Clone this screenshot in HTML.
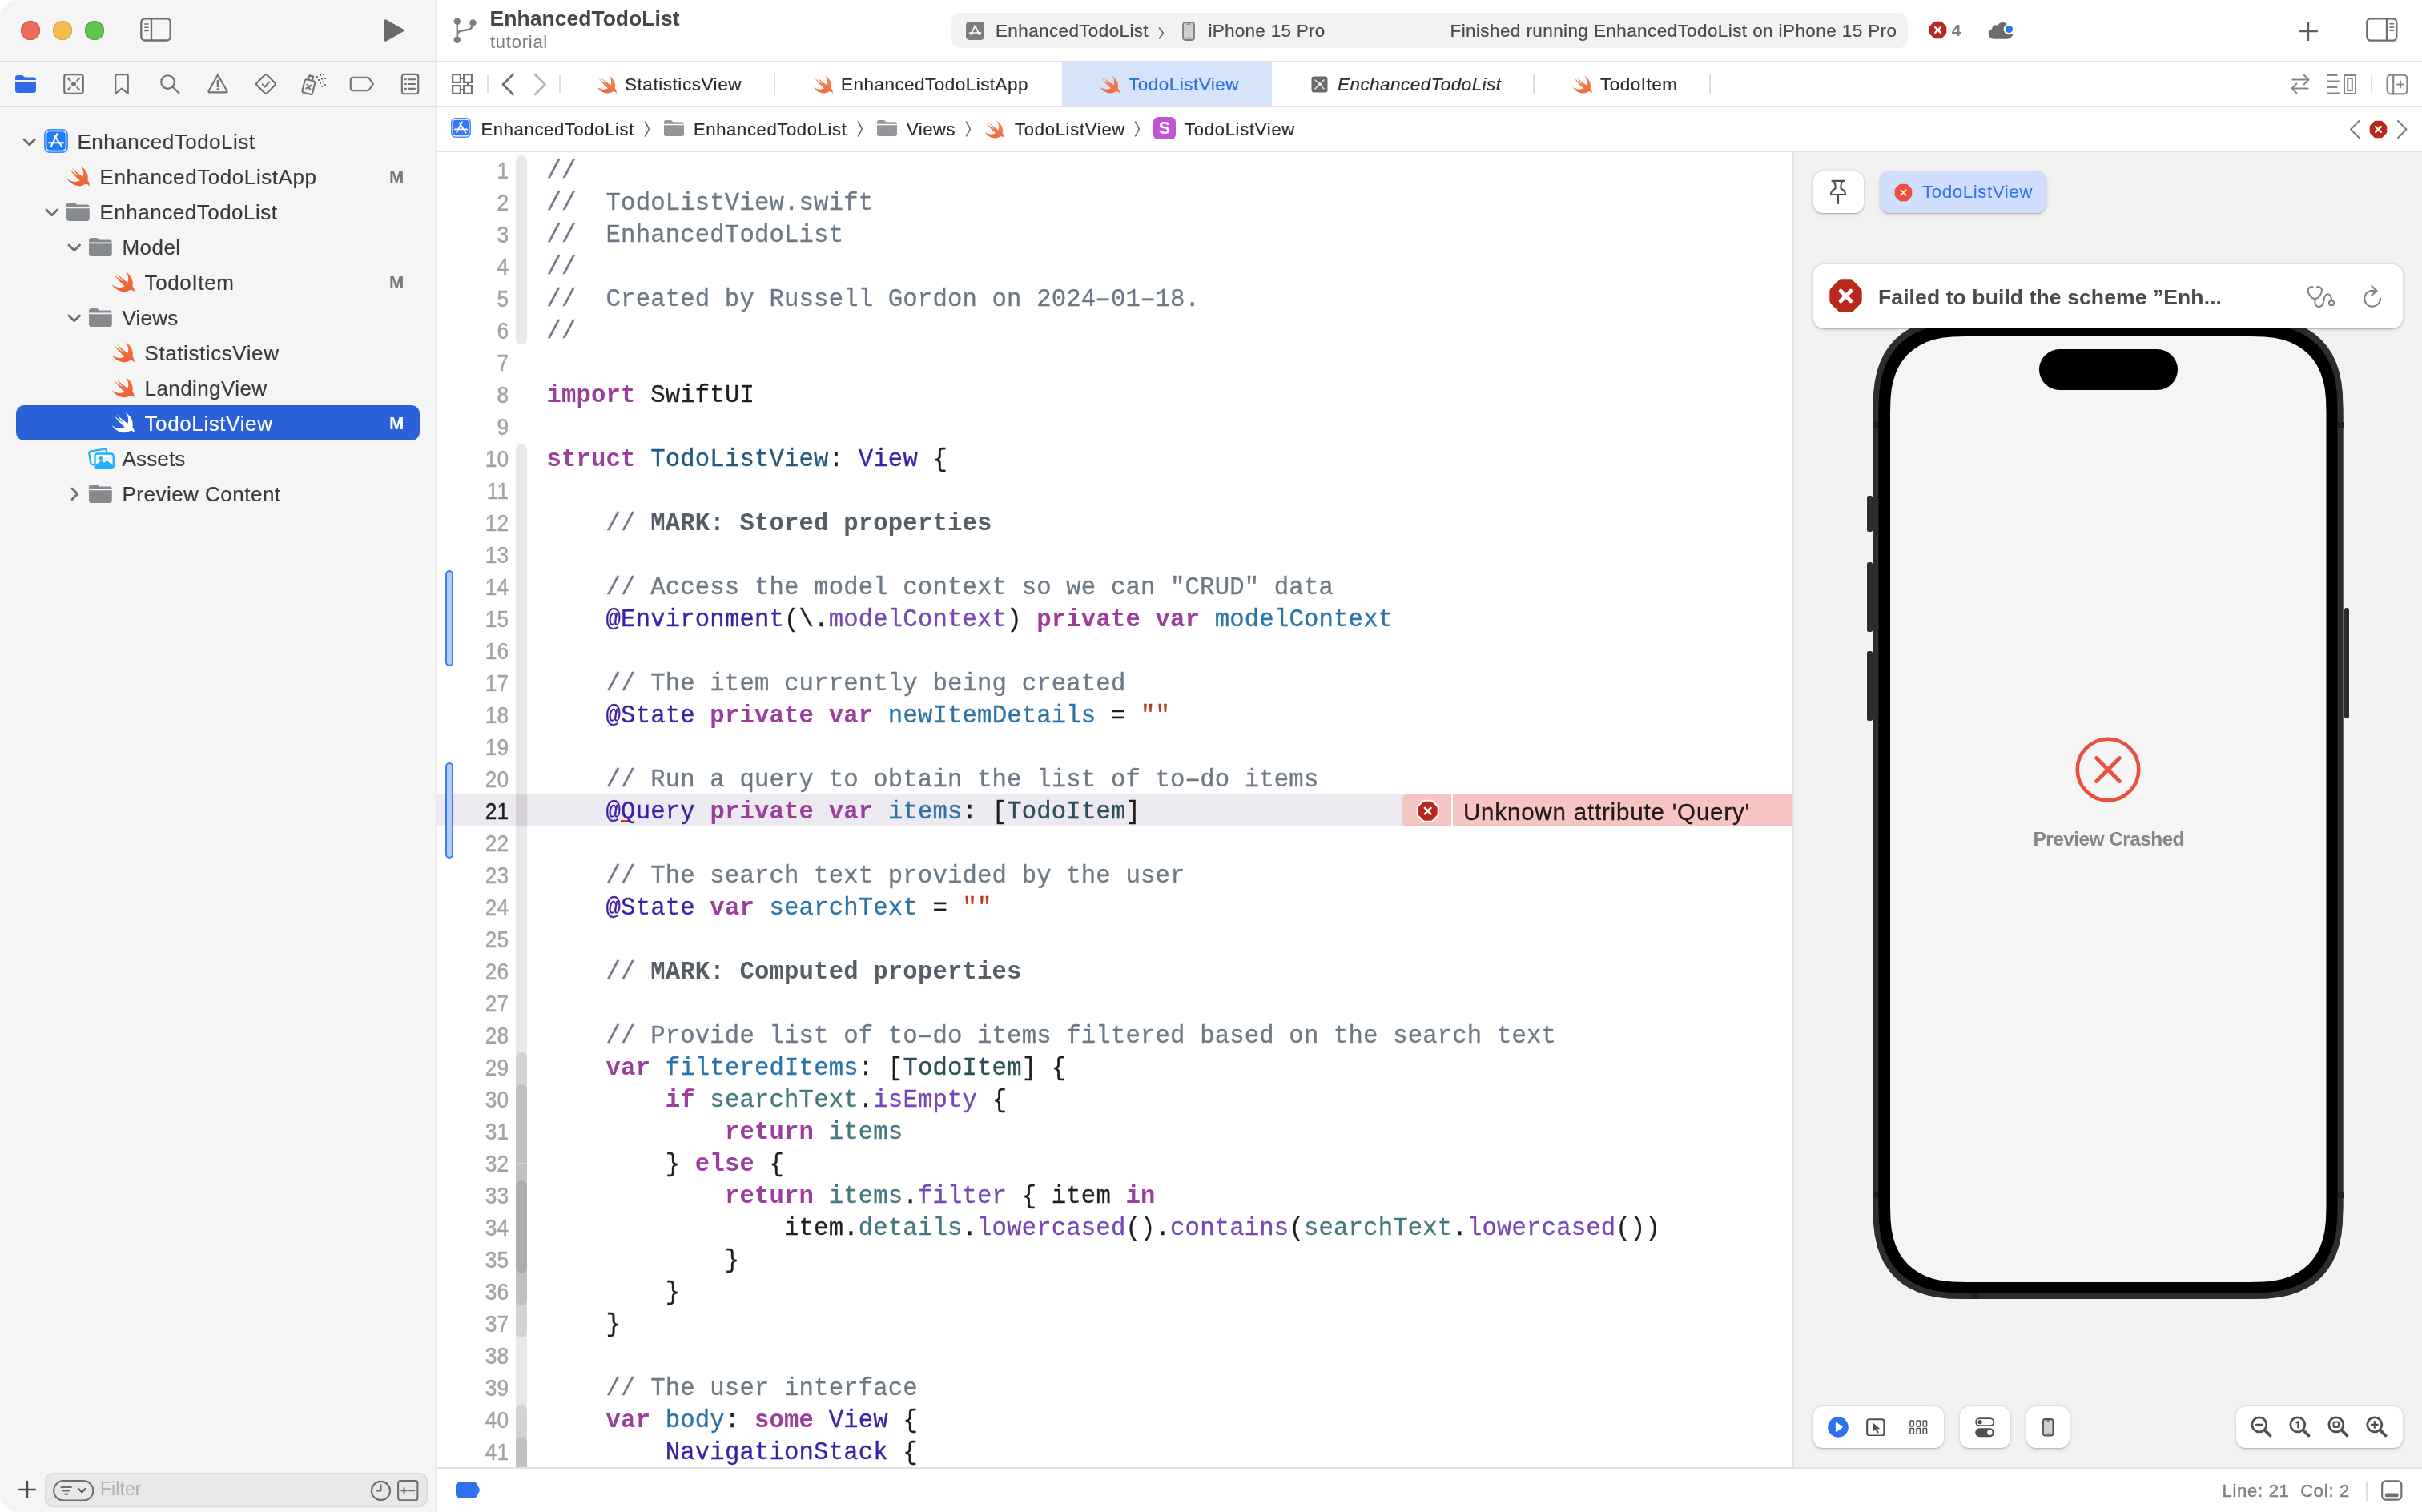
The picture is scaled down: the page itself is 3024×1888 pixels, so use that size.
<!DOCTYPE html>
<html lang="en">
<head>
<meta charset="utf-8">
<title>EnhancedTodoList — TodoListView.swift</title>
<style>
*{box-sizing:border-box;margin:0;padding:0}
html,body{width:3024px;height:1888px;overflow:hidden;background:#fff}
body{font-family:"Liberation Sans",sans-serif;color:#262626;position:relative;-webkit-font-smoothing:antialiased}
.abs{position:absolute}
#win{position:absolute;left:0;top:0;width:3024px;height:1888px;border-radius:22px;overflow:hidden;background:#fff;will-change:transform}
/* ---------- sidebar ---------- */
#sidebar{position:absolute;left:0;top:0;width:544px;height:1888px;background:#f5f5f5}
#sbdiv{position:absolute;left:543px;top:0;width:3px;height:1888px;background:linear-gradient(90deg,#f1f1f1 0,#f1f1f1 33%,#e9e9e9 33%,#e9e9e9 66%,#dedede 66%)}
.hline{position:absolute;height:2px;background:#e2e2e2}
.tl{position:absolute;top:26px;width:24px;height:24px;border-radius:50%}
/* ---------- text helpers ---------- */
.t{position:absolute;white-space:pre;line-height:1}


#editor{position:absolute;left:546px;top:190px;width:1692px;height:1642px;overflow:hidden;background:#fff}
#edin{position:absolute;left:-546px;top:-190px;width:3024px;height:1888px}
#edin>*{position:absolute}
.curline{left:546px;top:992px;width:1692px;height:40px;background:#ede9f0}
.rbwrap{left:644px;top:0;width:14px;height:1888px;overflow:hidden}
.rbwrap>*{position:absolute}
.rb{left:0;width:14px;border-radius:7px}
.r0{background:#e8e8e8}.r1{background:#d3d3d3;box-shadow:0 0 0 1px #e2e2e2}.r2{background:#c0c0c0;box-shadow:0 0 0 1px #d3d3d3}.r3{background:#acacac;box-shadow:0 0 0 1px #c6c6c6}
.rbcur{left:0;width:14px;top:992px;height:40px;background:#d6d0d9}
.chg{left:556px;width:10px;height:120px;border:2px solid #3b7cf5;border-radius:5px;background:#b3ccf9}
.ln{left:447px;width:188px;text-align:right;height:40px;line-height:40px;font-size:29.5px;color:#a3a3a3;font-family:"Liberation Sans",sans-serif;padding-top:0.500px;transform:scaleX(0.890);transform-origin:100% 50%;-webkit-text-stroke:0.45px currentColor}
.ln.cur{color:#1a1a1a}
.cl{left:682.400px;padding-top:1.700px;height:40px;line-height:40px;font-family:"Liberation Mono",monospace;font-size:30.600px;letter-spacing:0.180px;white-space:pre;color:#1f1f1f;-webkit-text-stroke:0.3px currentColor}
.cl .c{color:#6c7986}.cl .k{color:#9c3f9c;font-weight:bold;-webkit-text-stroke:0}.cl .td{color:#25587f}.cl .od{color:#2b73a8}
.cl .pt{color:#2b4f55}.cl .pv{color:#45777f}.cl .st,.cl .stu{color:#3b1fa6}.cl .sf{color:#7647b5}.cl .s{color:#c03a28}
.cl .m{color:#535e69;font-weight:bold;-webkit-text-stroke:0}
.cl .hy{display:inline-block;transform:scaleX(1.7)}
.cl .stu{background:linear-gradient(#d12f1b,#d12f1b) 0 27.700px/11.200px 3px no-repeat}
.err1{left:1750px;top:992px;width:62px;height:40px;background:#f7c5c1;border-radius:7px 0 0 7px;box-shadow:2px 0 0 #fff}
.err2{left:1814px;top:992px;width:424px;height:40px;background:#f7c5c1}

#pv{position:absolute;left:2240px;top:190px;width:784px;height:1643px;background:#f2f2f2}
.card{position:absolute;background:#fff;box-shadow:0 0.500px 1.500px rgba(0,0,0,.22),0 1.500px 6px rgba(0,0,0,.10)}

</style>
</head>
<body>
<svg width="0" height="0" style="position:absolute"><defs><linearGradient id="swg" x1="0" y1="0" x2="0" y2="1"><stop offset="0" stop-color="#f28b55"/><stop offset="1" stop-color="#ed6b3f"/></linearGradient><linearGradient id="swg2" x1="0" y1="0" x2="0" y2="1"><stop offset="0" stop-color="#f1743f"/><stop offset="1" stop-color="#ee6136"/></linearGradient></defs></svg>
<div id="win">
<div id="sidebar"></div>
<div id="sbdiv"></div>
<div class="tl" style="left:26px;background:#ed6a5e;box-shadow:inset 0 0 0 1px #d5534a"></div>
<div class="tl" style="left:66px;background:#f4bd50;box-shadow:inset 0 0 0 1px #d9a23c"></div>
<div class="tl" style="left:106px;background:#61c354;box-shadow:inset 0 0 0 1px #4ea73f"></div>
<svg class="abs" style="left:174.500px;top:22px" width="40" height="32" viewBox="0 0 40 32"><rect x="1.300" y="1.300" width="36.400" height="27.200" rx="4.600" fill="none" stroke="#6e6e6e" stroke-width="2.300"/><path d="M14 1.500v27" stroke="#6e6e6e" stroke-width="2.300"/><path d="M5.800 8h4.200M5.800 12.200h4.200M5.800 16.400h4.200" stroke="#6e6e6e" stroke-width="1.600" stroke-linecap="round"/></svg>
<svg class="abs" style="left:478px;top:23px" width="28" height="30" viewBox="0 0 28 30"><path d="M2 2.800c0-1.300 1.200-2 2.300-1.400L25.500 13.600c1.100.6 1.100 2.200 0 2.800L4.300 28.600C3.200 29.200 2 28.500 2 27.200z" fill="#6a6a6a"/></svg>
<div class="hline" style="left:0;top:76px;width:544px;background:#dcdcdc"></div>
<svg class="abs" style="left:19.0px;top:94.0px" width="26" height="22" viewBox="0 0 26 22"><path d="M0 3C0 1.300 1.200 0 2.800 0h5c1 0 1.600.300 2.300.900l.900.800c.600.500 1.100.700 2 .700H23c1.700 0 3 1.200 3 2.900V6H0z" fill="#2f6be8"/><path d="M0 8h26v11c0 1.700-1.300 3-3 3H3c-1.700 0-3-1.300-3-3z" fill="#2f6be8"/></svg>
<svg class="abs" style="left:78.0px;top:91.0px" width="28" height="28" viewBox="0 0 28 28"><rect x="2.200" y="2.200" width="23.600" height="23.600" rx="3" fill="none" stroke="#737373" stroke-width="2.150" stroke-linecap="round" stroke-linejoin="round"/><circle cx="14" cy="14" r="3" fill="#737373"/><path d="M7 7l2.700 2.700M21 7l-2.700 2.700M7 21l2.700-2.700M21 21l-2.700-2.700" fill="none" stroke="#737373" stroke-width="2.150" stroke-linecap="round" stroke-linejoin="round"/></svg>
<svg class="abs" style="left:142.0px;top:91.0px" width="20" height="28" viewBox="0 0 20 28"><path d="M2.200 4.200c0-1.100.900-2 2-2h11.600c1.100 0 2 .900 2 2V26L10 19.500 2.200 26z" fill="none" stroke="#737373" stroke-width="2.150" stroke-linecap="round" stroke-linejoin="round"/></svg>
<svg class="abs" style="left:198.0px;top:91.0px" width="28" height="28" viewBox="0 0 28 28"><circle cx="11.500" cy="11.500" r="8.300" fill="none" stroke="#737373" stroke-width="2.150" stroke-linecap="round" stroke-linejoin="round"/><path d="M17.800 17.800L25.500 25.500" fill="none" stroke="#737373" stroke-width="2.150" stroke-linecap="round" stroke-linejoin="round" stroke-width="3"/></svg>
<svg class="abs" style="left:258.0px;top:91.0px" width="28" height="26" viewBox="0 0 28 26"><path d="M14 2.500L25.500 22.800c.4.800-.1 1.500-.9 1.500H3.400c-.8 0-1.300-.7-.9-1.500z" fill="none" stroke="#737373" stroke-width="2.150" stroke-linecap="round" stroke-linejoin="round"/><path d="M14 10v7" stroke="#737373" stroke-width="2.600" stroke-linecap="round"/><circle cx="14" cy="20.600" r="1.500" fill="#737373"/></svg>
<svg class="abs" style="left:317.0px;top:90.0px" width="30" height="30" viewBox="0 0 30 30"><rect x="6" y="6" width="18" height="18" rx="2.200" transform="rotate(45 15 15)" fill="none" stroke="#737373" stroke-width="2.150" stroke-linecap="round" stroke-linejoin="round"/><path d="M10.800 15.500l3 3 5.400-6" fill="none" stroke="#737373" stroke-width="2.150" stroke-linecap="round" stroke-linejoin="round"/></svg>
<svg class="abs" style="left:376.0px;top:90.0px" width="32" height="30" viewBox="0 0 32 30"><g transform="rotate(14 9 18)"><rect x="3" y="10" width="13" height="17" rx="2.500" fill="none" stroke="#737373" stroke-width="2.150" stroke-linecap="round" stroke-linejoin="round"/><path d="M7 10V4.500h5V10" fill="none" stroke="#737373" stroke-width="2.150" stroke-linecap="round" stroke-linejoin="round"/><path d="M7 16l5 5M12 16l-5 5" fill="none" stroke="#737373" stroke-width="2.150" stroke-linecap="round" stroke-linejoin="round" stroke-width="2"/></g><g fill="#737373"><rect x="19" y="5" width="2" height="2"/><rect x="23" y="3" width="2" height="2"/><rect x="27" y="2" width="2" height="2"/><rect x="21" y="9" width="2" height="2"/><rect x="25" y="7.500" width="2" height="2"/><rect x="29" y="7" width="2" height="2"/><rect x="23" y="13" width="2" height="2"/><rect x="27" y="11.500" width="2" height="2"/><rect x="25" y="17" width="2" height="2"/><rect x="29" y="15" width="2" height="2"/></g></svg>
<svg class="abs" style="left:436.0px;top:95.0px" width="32" height="20" viewBox="0 0 32 20"><path d="M4.500 1.800h18.300c.8 0 1.500.3 2 1l4.600 6.200c.5.600.5 1.400 0 2l-4.600 6.200c-.5.700-1.200 1-2 1H4.500c-1.500 0-2.700-1.200-2.700-2.700v-11c0-1.500 1.200-2.700 2.700-2.700z" fill="none" stroke="#737373" stroke-width="2.150" stroke-linecap="round" stroke-linejoin="round"/></svg>
<svg class="abs" style="left:500.0px;top:91.0px" width="24" height="28" viewBox="0 0 24 28"><rect x="1.800" y="1.800" width="20.400" height="24.400" rx="3" fill="none" stroke="#737373" stroke-width="2.150" stroke-linecap="round" stroke-linejoin="round"/><path d="M10 8.200h8M10 14h8M10 19.800h8" fill="none" stroke="#737373" stroke-width="2.150" stroke-linecap="round" stroke-linejoin="round"/><path d="M5.800 8.200h1.200M5.800 14h1.200M5.800 19.800h1.200" fill="none" stroke="#737373" stroke-width="2.150" stroke-linecap="round" stroke-linejoin="round"/></svg>
<div class="hline" style="left:0;top:132px;width:544px;background:#dcdcdc"></div>
<svg class="abs" style="left:27.5px;top:171.8px" width="17.5" height="10.75" viewBox="-2 -2 17.5 10.75"><path d="M0 0L6.75 6.75L13.5 0" fill="none" stroke="#6b6b6b" stroke-width="2.8" stroke-linecap="round" stroke-linejoin="round"/></svg>
<svg class="abs" style="left:54.7px;top:161.0px" width="30" height="30" viewBox="0 0 30 30"><rect x="0" y="0" width="30" height="30" rx="7" fill="#3f8ff9"/><rect x="2.600" y="2.600" width="24.800" height="24.800" rx="4.600" fill="#1f7cf8" stroke="#fff" stroke-width="1.500"/><g stroke="#fff" stroke-width="2.100" stroke-linecap="round" fill="none"><path d="M8.600 22.200L16.400 6.200M13.300 8.600l9 13.600M5.900 17.300h18.300"/></g></svg>
<span class="t" style="left:96.5px;top:163.5px;font-size:26px;color:#3a3a3a;letter-spacing:0.508px;-webkit-text-stroke:0.2px;">EnhancedTodoList</span>
<svg class="abs" style="left:79.8px;top:202.1px" width="37.1" height="37.1" viewBox="0 0 24 24"><path d="M13.543 3.41c4.114 2.47 6.545 7.162 5.549 11.131-.024.093-.05.181-.076.272l.002.001c2.062 2.538 1.5 5.258 1.236 4.745-1.072-2.086-3.066-1.568-4.088-1.043a6.803 6.803 0 0 1-.281.158l-.02.012-.002.002c-2.115 1.123-4.957 1.205-7.812-.022a12.568 12.568 0 0 1-5.64-4.838c.649.48 1.35.902 2.097 1.252 3.019 1.414 6.051 1.311 8.197-.002C9.651 12.73 7.101 9.67 5.146 7.191a10.628 10.628 0 0 1-1.005-1.384c2.34 2.142 6.038 4.83 7.365 5.576C8.69 8.408 6.208 4.743 6.324 4.86c4.436 4.47 8.528 6.996 8.528 6.996.154.085.27.154.36.213.085-.215.16-.437.224-.668.708-2.588-.09-5.548-1.893-7.992z" fill="url(#swg2)"/></svg>
<span class="t" style="left:124.5px;top:207.5px;font-size:26px;color:#3a3a3a;letter-spacing:0.572px;-webkit-text-stroke:0.2px;">EnhancedTodoListApp</span>
<span class="t" style="left:486.0px;top:209.5px;font-size:22px;color:#7a7a7a;font-weight:bold;">M</span>
<svg class="abs" style="left:55.5px;top:259.8px" width="17.5" height="10.75" viewBox="-2 -2 17.5 10.75"><path d="M0 0L6.75 6.75L13.5 0" fill="none" stroke="#6b6b6b" stroke-width="2.8" stroke-linecap="round" stroke-linejoin="round"/></svg>
<svg class="abs" style="left:83.4px;top:253.2px" width="28.8" height="23.0" viewBox="0 0 30 24"><path d="M0 3.2C0 1.4 1.3 0 3 0h6.6c1 0 1.7.3 2.4 1l1 1c.5.5 1 .7 1.800.7H27c1.700 0 3 1.300 3 3V5.800H0z" fill="#868a8e"/><path d="M0 7.600h30V20.800c0 1.800-1.300 3.200-3 3.200H3c-1.700 0-3-1.400-3-3.200z" fill="#868a8e"/></svg>
<span class="t" style="left:124.5px;top:251.5px;font-size:26px;color:#3a3a3a;letter-spacing:0.508px;-webkit-text-stroke:0.2px;">EnhancedTodoList</span>
<svg class="abs" style="left:83.5px;top:303.8px" width="17.5" height="10.75" viewBox="-2 -2 17.5 10.75"><path d="M0 0L6.75 6.75L13.5 0" fill="none" stroke="#6b6b6b" stroke-width="2.8" stroke-linecap="round" stroke-linejoin="round"/></svg>
<svg class="abs" style="left:111.4px;top:297.2px" width="28.8" height="23.0" viewBox="0 0 30 24"><path d="M0 3.2C0 1.4 1.3 0 3 0h6.6c1 0 1.7.3 2.4 1l1 1c.5.5 1 .7 1.800.7H27c1.700 0 3 1.300 3 3V5.800H0z" fill="#868a8e"/><path d="M0 7.600h30V20.800c0 1.800-1.300 3.200-3 3.200H3c-1.700 0-3-1.400-3-3.200z" fill="#868a8e"/></svg>
<span class="t" style="left:152.5px;top:295.5px;font-size:26px;color:#3a3a3a;letter-spacing:0.441px;-webkit-text-stroke:0.2px;">Model</span>
<svg class="abs" style="left:135.8px;top:334.1px" width="37.1" height="37.1" viewBox="0 0 24 24"><path d="M13.543 3.41c4.114 2.47 6.545 7.162 5.549 11.131-.024.093-.05.181-.076.272l.002.001c2.062 2.538 1.5 5.258 1.236 4.745-1.072-2.086-3.066-1.568-4.088-1.043a6.803 6.803 0 0 1-.281.158l-.02.012-.002.002c-2.115 1.123-4.957 1.205-7.812-.022a12.568 12.568 0 0 1-5.64-4.838c.649.48 1.35.902 2.097 1.252 3.019 1.414 6.051 1.311 8.197-.002C9.651 12.73 7.101 9.67 5.146 7.191a10.628 10.628 0 0 1-1.005-1.384c2.34 2.142 6.038 4.83 7.365 5.576C8.69 8.408 6.208 4.743 6.324 4.86c4.436 4.47 8.528 6.996 8.528 6.996.154.085.27.154.36.213.085-.215.16-.437.224-.668.708-2.588-.09-5.548-1.893-7.992z" fill="url(#swg2)"/></svg>
<span class="t" style="left:180.5px;top:339.5px;font-size:26px;color:#3a3a3a;letter-spacing:0.637px;-webkit-text-stroke:0.2px;">TodoItem</span>
<span class="t" style="left:486.0px;top:341.5px;font-size:22px;color:#7a7a7a;font-weight:bold;">M</span>
<svg class="abs" style="left:83.5px;top:391.8px" width="17.5" height="10.75" viewBox="-2 -2 17.5 10.75"><path d="M0 0L6.75 6.75L13.5 0" fill="none" stroke="#6b6b6b" stroke-width="2.8" stroke-linecap="round" stroke-linejoin="round"/></svg>
<svg class="abs" style="left:111.4px;top:385.2px" width="28.8" height="23.0" viewBox="0 0 30 24"><path d="M0 3.2C0 1.4 1.3 0 3 0h6.6c1 0 1.7.3 2.4 1l1 1c.5.5 1 .7 1.800.7H27c1.700 0 3 1.300 3 3V5.800H0z" fill="#868a8e"/><path d="M0 7.600h30V20.800c0 1.800-1.300 3.200-3 3.200H3c-1.700 0-3-1.400-3-3.200z" fill="#868a8e"/></svg>
<span class="t" style="left:152.5px;top:383.5px;font-size:26px;color:#3a3a3a;letter-spacing:0.222px;-webkit-text-stroke:0.2px;">Views</span>
<svg class="abs" style="left:135.8px;top:422.1px" width="37.1" height="37.1" viewBox="0 0 24 24"><path d="M13.543 3.41c4.114 2.47 6.545 7.162 5.549 11.131-.024.093-.05.181-.076.272l.002.001c2.062 2.538 1.5 5.258 1.236 4.745-1.072-2.086-3.066-1.568-4.088-1.043a6.803 6.803 0 0 1-.281.158l-.02.012-.002.002c-2.115 1.123-4.957 1.205-7.812-.022a12.568 12.568 0 0 1-5.64-4.838c.649.48 1.35.902 2.097 1.252 3.019 1.414 6.051 1.311 8.197-.002C9.651 12.73 7.101 9.67 5.146 7.191a10.628 10.628 0 0 1-1.005-1.384c2.34 2.142 6.038 4.83 7.365 5.576C8.69 8.408 6.208 4.743 6.324 4.86c4.436 4.47 8.528 6.996 8.528 6.996.154.085.27.154.36.213.085-.215.16-.437.224-.668.708-2.588-.09-5.548-1.893-7.992z" fill="url(#swg2)"/></svg>
<span class="t" style="left:180.5px;top:427.5px;font-size:26px;color:#3a3a3a;letter-spacing:0.578px;-webkit-text-stroke:0.2px;">StatisticsView</span>
<svg class="abs" style="left:135.8px;top:466.1px" width="37.1" height="37.1" viewBox="0 0 24 24"><path d="M13.543 3.41c4.114 2.47 6.545 7.162 5.549 11.131-.024.093-.05.181-.076.272l.002.001c2.062 2.538 1.5 5.258 1.236 4.745-1.072-2.086-3.066-1.568-4.088-1.043a6.803 6.803 0 0 1-.281.158l-.02.012-.002.002c-2.115 1.123-4.957 1.205-7.812-.022a12.568 12.568 0 0 1-5.64-4.838c.649.48 1.35.902 2.097 1.252 3.019 1.414 6.051 1.311 8.197-.002C9.651 12.73 7.101 9.67 5.146 7.191a10.628 10.628 0 0 1-1.005-1.384c2.34 2.142 6.038 4.83 7.365 5.576C8.69 8.408 6.208 4.743 6.324 4.86c4.436 4.47 8.528 6.996 8.528 6.996.154.085.27.154.36.213.085-.215.16-.437.224-.668.708-2.588-.09-5.548-1.893-7.992z" fill="url(#swg2)"/></svg>
<span class="t" style="left:180.5px;top:471.5px;font-size:26px;color:#3a3a3a;letter-spacing:0.419px;-webkit-text-stroke:0.2px;">LandingView</span>
<div class="abs" style="left:20px;top:506px;width:504px;height:44px;border-radius:10px;background:#2a60d8"></div>
<svg class="abs" style="left:135.8px;top:510.1px" width="37.1" height="37.1" viewBox="0 0 24 24"><path d="M13.543 3.41c4.114 2.47 6.545 7.162 5.549 11.131-.024.093-.05.181-.076.272l.002.001c2.062 2.538 1.5 5.258 1.236 4.745-1.072-2.086-3.066-1.568-4.088-1.043a6.803 6.803 0 0 1-.281.158l-.02.012-.002.002c-2.115 1.123-4.957 1.205-7.812-.022a12.568 12.568 0 0 1-5.64-4.838c.649.48 1.35.902 2.097 1.252 3.019 1.414 6.051 1.311 8.197-.002C9.651 12.73 7.101 9.67 5.146 7.191a10.628 10.628 0 0 1-1.005-1.384c2.34 2.142 6.038 4.83 7.365 5.576C8.69 8.408 6.208 4.743 6.324 4.86c4.436 4.47 8.528 6.996 8.528 6.996.154.085.27.154.36.213.085-.215.16-.437.224-.668.708-2.588-.09-5.548-1.893-7.992z" fill="#fff"/></svg>
<span class="t" style="left:180.5px;top:515.5px;font-size:26px;color:#fff;letter-spacing:0.608px;-webkit-text-stroke:0.2px;">TodoListView</span>
<span class="t" style="left:486.0px;top:517.5px;font-size:22px;color:#fff;font-weight:bold;">M</span>
<svg class="abs" style="left:109.5px;top:558.7px" width="33" height="27.500" viewBox="0 0 34 28.300"><g transform="rotate(-9 12 11)"><rect x="2" y="3.200" width="22.500" height="17.500" rx="3" fill="none" stroke="#22aff8" stroke-width="2.300"/></g><rect x="8.700" y="7.700" width="24" height="19.400" rx="3.200" fill="#f5f5f5" stroke="#22aff8" stroke-width="2.400"/><path d="M9.500 26.300v-3.300l6-5.800c.8-.8 1.900-.8 2.700 0l2.300 2.300 2.300-2c.8-.7 1.900-.7 2.700 0l6.300 5.500v3.300z" fill="#22aff8"/><circle cx="16.300" cy="13.700" r="2.300" fill="#22aff8"/></svg>
<span class="t" style="left:152.5px;top:559.5px;font-size:26px;color:#3a3a3a;letter-spacing:0.164px;-webkit-text-stroke:0.2px;">Assets</span>
<svg class="abs" style="left:87.6px;top:608.2px" width="10.75" height="17.5" viewBox="-2 -2 10.75 17.5"><path d="M0 0L6.75 6.75L0 13.5" fill="none" stroke="#6b6b6b" stroke-width="2.8" stroke-linecap="round" stroke-linejoin="round"/></svg>
<svg class="abs" style="left:111.4px;top:605.2px" width="28.8" height="23.0" viewBox="0 0 30 24"><path d="M0 3.2C0 1.4 1.3 0 3 0h6.6c1 0 1.7.3 2.4 1l1 1c.5.5 1 .7 1.800.7H27c1.700 0 3 1.300 3 3V5.800H0z" fill="#868a8e"/><path d="M0 7.600h30V20.800c0 1.800-1.300 3.200-3 3.200H3c-1.700 0-3-1.400-3-3.200z" fill="#868a8e"/></svg>
<span class="t" style="left:152.5px;top:603.5px;font-size:26px;color:#3a3a3a;letter-spacing:0.485px;-webkit-text-stroke:0.2px;">Preview Content</span>
<svg class="abs" style="left:23px;top:1849px" width="22" height="22" viewBox="0 0 22 22"><path d="M11 1v20M1 11h20" stroke="#4a4a4a" stroke-width="2.400" stroke-linecap="round"/></svg>
<div class="abs" style="left:56px;top:1838.500px;width:478px;height:43.500px;border-radius:11px;background:#e8e8e8;box-shadow:inset 0 0 0 1.500px #d9d9d9"></div>
<svg class="abs" style="left:65.500px;top:1847.500px" width="51.500" height="26.700" viewBox="0 0 54 28"><rect x="1.200" y="1.200" width="51.600" height="25.600" rx="12.800" fill="none" stroke="#6e6e6e" stroke-width="2.200"/><path d="M11 9.500h13M13.500 14h8M16 18.500h3" stroke="#6e6e6e" stroke-width="2.200" stroke-linecap="round"/><path d="M33.500 11.500l4.500 4.500 4.500-4.500" fill="none" stroke="#5e5e5e" stroke-width="2.400" stroke-linecap="round" stroke-linejoin="round"/></svg>
<span class="t" style="left:125.0px;top:1848.3px;font-size:23px;color:#b0b0b0;letter-spacing:0.065px;">Filter</span>
<svg class="abs" style="left:461.500px;top:1847.500px" width="27" height="27" viewBox="0 0 28 28"><circle cx="14" cy="14" r="12" fill="none" stroke="#6e6e6e" stroke-width="2.200"/><path d="M14 6.500V14H8.500" fill="none" stroke="#6e6e6e" stroke-width="2.200" stroke-linecap="round" stroke-linejoin="round"/></svg>
<svg class="abs" style="left:496px;top:1847.500px" width="26.500" height="26.500" viewBox="0 0 28 28"><rect x="1.200" y="1.200" width="25.600" height="25.600" rx="3" fill="none" stroke="#6e6e6e" stroke-width="2.200"/><path d="M5.500 14h7M9 10.500v7M16 14h6.500" stroke="#6e6e6e" stroke-width="2.200" stroke-linecap="round"/></svg>
<div class="hline" style="left:546px;top:76px;width:2478px"></div>
<svg class="abs" style="left:562px;top:18px" width="38" height="40" viewBox="0 0 38 40"><g fill="#7d7d7d"><circle cx="8.800" cy="8.800" r="4.200"/><circle cx="28.500" cy="10.500" r="4.200"/><circle cx="8.800" cy="31.800" r="4.200"/></g><path d="M8.800 9v22M8.800 27c0-6 4-6.500 10-7.200 6-.7 9.700-2.300 9.700-9" fill="none" stroke="#7d7d7d" stroke-width="2.400"/></svg>
<span class="t" style="left:611.5px;top:10.4px;font-size:26.5px;color:#464646;letter-spacing:0.030px;font-weight:bold;">EnhancedTodoList</span>
<span class="t" style="left:612.0px;top:41.6px;font-size:22px;color:#7d7d7d;letter-spacing:0.746px;">tutorial</span>
<div class="abs" style="left:1188px;top:16px;width:1194px;height:44px;border-radius:11px;background:#f2f2f2"></div>
<svg class="abs" style="left:1206px;top:26.800px" width="23" height="23" viewBox="0 0 23 23"><rect width="23" height="23" rx="4.500" fill="#7d7d7d"/><g stroke="#fff" stroke-width="1.700" stroke-linecap="round" fill="none"><path d="M10.700 6.800L6.300 16M12.300 6.800l4.400 9.200M10.200 5.200l1.300 2.400M12.800 5.200l-1.300 2.400M4.500 14h14"/></g></svg>
<span class="t" style="left:1243.0px;top:28.2px;font-size:22.5px;color:#4a4a4a;letter-spacing:0.365px;-webkit-text-stroke:0.2px;">EnhancedTodoList</span>
<svg class="abs" style="left:1446px;top:33.500px" width="8" height="15" viewBox="0 0 8 15"><path d="M1.500 1.200Q4.300 4.500 6.300 7.500 4.300 10.500 1.500 13.800" fill="none" stroke="#6e6e6e" stroke-width="1.800" stroke-linecap="round" stroke-linejoin="round"/></svg>
<svg class="abs" style="left:1476px;top:26.500px" width="16" height="24" viewBox="0 0 16 24"><rect x="1" y="1" width="14" height="22" rx="3" fill="#cfcfcf" stroke="#7d7d7d" stroke-width="1.800"/><path d="M6 3.200h4M5.500 20.500h5" stroke="#7d7d7d" stroke-width="1.300" stroke-linecap="round"/></svg>
<span class="t" style="left:1508.5px;top:28.2px;font-size:22.5px;color:#4a4a4a;letter-spacing:0.261px;-webkit-text-stroke:0.2px;">iPhone 15 Pro</span>
<span class="t" style="left:1810.5px;top:28.2px;font-size:22.5px;color:#4a4a4a;letter-spacing:0.401px;-webkit-text-stroke:0.2px;">Finished running EnhancedTodoList on iPhone 15 Pro</span>
<svg class="abs" style="left:2408.2px;top:26.1px" width="23.0" height="23.0" viewBox="0 0 26 26"><path d="M9.500 4.200h7l5.300 5.300v7l-5.300 5.300h-7l-5.300-5.300v-7z" fill="#b8281c" stroke="#b8281c" stroke-width="6.800" stroke-linejoin="round"/><path d="M9.200 9.200l7.600 7.600M16.800 9.200l-7.600 7.600" stroke="#fff" stroke-width="2.6" stroke-linecap="round"/></svg>
<span class="t" style="left:2436.8px;top:27.3px;font-size:21px;color:#7d7d7d;font-weight:bold;">4</span>
<svg class="abs" style="left:2478px;top:24px" width="40" height="30" viewBox="2478 24 40 30"><path d="M2489.500 48.700c-4 0-6.800-2.800-6.800-6.400 0-2.800 1.700-5.200 4.300-6.100.3-3 2.300-5 5-5 .8 0 1.500.2 2.200.5 1.300-2.200 3.700-3.600 6.500-3.600 4.300 0 7.800 3.300 8 7.500 2.700.7 4.600 3.100 4.600 6 0 3.900-3 7.100-7.100 7.100z" fill="#6c6c6c"/><circle cx="2508.400" cy="36.500" r="6.700" fill="#fff"/><circle cx="2508.400" cy="36.500" r="4.600" fill="#2f72f0"/></svg>
<svg class="abs" style="left:2870px;top:26.500px" width="24" height="24" viewBox="0 0 24 24"><path d="M12 1v22M1 12h22" stroke="#5e5e5e" stroke-width="2.400" stroke-linecap="round"/></svg>
<svg class="abs" style="left:2954px;top:22px" width="40" height="31" viewBox="0 0 40 31"><rect x="1.300" y="1.300" width="37" height="27.400" rx="4.600" fill="none" stroke="#6e6e6e" stroke-width="2.300"/><path d="M26 1.500v27" stroke="#6e6e6e" stroke-width="2.300"/><path d="M30 7.700h4.600M30 12h4.600M30 16.300h4.600" stroke="#6e6e6e" stroke-width="1.600" stroke-linecap="round"/></svg>
<div class="abs" style="left:1326px;top:78px;width:262px;height:54px;background:#d5e3fb"></div>
<div class="hline" style="left:546px;top:132px;width:2478px"></div>
<svg class="abs" style="left:563px;top:91px" width="28" height="28" viewBox="0 0 28 28"><g fill="none" stroke="#737373" stroke-width="2.200"><rect x="2.100" y="2.100" width="9.800" height="9.800"/><rect x="16.100" y="2.100" width="9.800" height="9.800"/><rect x="2.100" y="16.100" width="9.800" height="9.800"/><rect x="16.100" y="16.100" width="9.800" height="9.800"/><path d="M12 7h4M21 12v4M12 21h4"/></g></svg>
<div class="abs" style="left:608px;top:93px;width:2px;height:24px;background:#dedede"></div>
<div class="abs" style="left:698px;top:93px;width:2px;height:24px;background:#dedede"></div>
<div class="abs" style="left:966px;top:93px;width:2px;height:24px;background:#dedede"></div>
<div class="abs" style="left:1914px;top:93px;width:2px;height:24px;background:#dedede"></div>
<div class="abs" style="left:2134px;top:93px;width:2px;height:24px;background:#dedede"></div>
<svg class="abs" style="left:625.8px;top:90.5px" width="16.5" height="29" viewBox="-2 -2 16.5 29"><path d="M12.5 0L0 12.5L12.5 25" fill="none" stroke="#6e6e6e" stroke-width="2.6" stroke-linecap="round" stroke-linejoin="round"/></svg>
<svg class="abs" style="left:665.8px;top:90.5px" width="16.5" height="29" viewBox="-2 -2 16.5 29"><path d="M0 0L12.5 12.5L0 25" fill="none" stroke="#b4b4b4" stroke-width="2.6" stroke-linecap="round" stroke-linejoin="round"/></svg>
<svg class="abs" style="left:741.6px;top:89.7px" width="32.4" height="32.4" viewBox="0 0 24 24"><path d="M13.543 3.41c4.114 2.47 6.545 7.162 5.549 11.131-.024.093-.05.181-.076.272l.002.001c2.062 2.538 1.5 5.258 1.236 4.745-1.072-2.086-3.066-1.568-4.088-1.043a6.803 6.803 0 0 1-.281.158l-.02.012-.002.002c-2.115 1.123-4.957 1.205-7.812-.022a12.568 12.568 0 0 1-5.64-4.838c.649.48 1.35.902 2.097 1.252 3.019 1.414 6.051 1.311 8.197-.002C9.651 12.73 7.101 9.67 5.146 7.191a10.628 10.628 0 0 1-1.005-1.384c2.34 2.142 6.038 4.83 7.365 5.576C8.69 8.408 6.208 4.743 6.324 4.86c4.436 4.47 8.528 6.996 8.528 6.996.154.085.27.154.36.213.085-.215.16-.437.224-.668.708-2.588-.09-5.548-1.893-7.992z" fill="url(#swg)"/></svg>
<span class="t" style="left:780.0px;top:94.6px;font-size:22.5px;color:#2b2b2b;letter-spacing:0.545px;-webkit-text-stroke:0.2px;">StatisticsView</span>
<svg class="abs" style="left:1012.1px;top:89.7px" width="32.4" height="32.4" viewBox="0 0 24 24"><path d="M13.543 3.41c4.114 2.47 6.545 7.162 5.549 11.131-.024.093-.05.181-.076.272l.002.001c2.062 2.538 1.5 5.258 1.236 4.745-1.072-2.086-3.066-1.568-4.088-1.043a6.803 6.803 0 0 1-.281.158l-.02.012-.002.002c-2.115 1.123-4.957 1.205-7.812-.022a12.568 12.568 0 0 1-5.64-4.838c.649.48 1.35.902 2.097 1.252 3.019 1.414 6.051 1.311 8.197-.002C9.651 12.73 7.101 9.67 5.146 7.191a10.628 10.628 0 0 1-1.005-1.384c2.34 2.142 6.038 4.83 7.365 5.576C8.69 8.408 6.208 4.743 6.324 4.86c4.436 4.47 8.528 6.996 8.528 6.996.154.085.27.154.36.213.085-.215.16-.437.224-.668.708-2.588-.09-5.548-1.893-7.992z" fill="url(#swg)"/></svg>
<span class="t" style="left:1050.0px;top:94.6px;font-size:22.5px;color:#2b2b2b;letter-spacing:0.464px;-webkit-text-stroke:0.2px;">EnhancedTodoListApp</span>
<svg class="abs" style="left:1370.1px;top:89.7px" width="32.4" height="32.4" viewBox="0 0 24 24"><path d="M13.543 3.41c4.114 2.47 6.545 7.162 5.549 11.131-.024.093-.05.181-.076.272l.002.001c2.062 2.538 1.5 5.258 1.236 4.745-1.072-2.086-3.066-1.568-4.088-1.043a6.803 6.803 0 0 1-.281.158l-.02.012-.002.002c-2.115 1.123-4.957 1.205-7.812-.022a12.568 12.568 0 0 1-5.64-4.838c.649.48 1.35.902 2.097 1.252 3.019 1.414 6.051 1.311 8.197-.002C9.651 12.73 7.101 9.67 5.146 7.191a10.628 10.628 0 0 1-1.005-1.384c2.34 2.142 6.038 4.83 7.365 5.576C8.69 8.408 6.208 4.743 6.324 4.86c4.436 4.47 8.528 6.996 8.528 6.996.154.085.27.154.36.213.085-.215.16-.437.224-.668.708-2.588-.09-5.548-1.893-7.992z" fill="url(#swg)"/></svg>
<span class="t" style="left:1409.0px;top:94.6px;font-size:22.5px;color:#2d6ee6;letter-spacing:0.486px;-webkit-text-stroke:0.2px;">TodoListView</span>
<svg class="abs" style="left:1637px;top:95px" width="21" height="21" viewBox="0 0 21 21"><rect x="0.500" y="0.500" width="20" height="20" rx="3.200" fill="#6a6a6a"/><circle cx="10.500" cy="10.500" r="2.600" fill="#e8e8e8"/><path d="M5 5l2.400 2.400M16 5l-2.400 2.400M5 16l2.400-2.400M16 16l-2.400-2.400" stroke="#e8e8e8" stroke-width="1.500" stroke-linecap="round"/></svg>
<span class="t" style="left:1670.0px;top:94.6px;font-size:22.5px;color:#2b2b2b;letter-spacing:0.450px;font-style:italic;-webkit-text-stroke:0.2px;">EnchancedTodoList</span>
<svg class="abs" style="left:1959.6px;top:89.7px" width="32.4" height="32.4" viewBox="0 0 24 24"><path d="M13.543 3.41c4.114 2.47 6.545 7.162 5.549 11.131-.024.093-.05.181-.076.272l.002.001c2.062 2.538 1.5 5.258 1.236 4.745-1.072-2.086-3.066-1.568-4.088-1.043a6.803 6.803 0 0 1-.281.158l-.02.012-.002.002c-2.115 1.123-4.957 1.205-7.812-.022a12.568 12.568 0 0 1-5.64-4.838c.649.48 1.35.902 2.097 1.252 3.019 1.414 6.051 1.311 8.197-.002C9.651 12.73 7.101 9.67 5.146 7.191a10.628 10.628 0 0 1-1.005-1.384c2.34 2.142 6.038 4.83 7.365 5.576C8.69 8.408 6.208 4.743 6.324 4.86c4.436 4.47 8.528 6.996 8.528 6.996.154.085.27.154.36.213.085-.215.16-.437.224-.668.708-2.588-.09-5.548-1.893-7.992z" fill="url(#swg)"/></svg>
<span class="t" style="left:1998.0px;top:94.6px;font-size:22.5px;color:#2b2b2b;letter-spacing:0.492px;-webkit-text-stroke:0.2px;">TodoItem</span>
<svg class="abs" style="left:2858px;top:91px" width="28" height="28" viewBox="0 0 28 28"><g fill="none" stroke="#878787" stroke-width="2" stroke-linecap="round" stroke-linejoin="round"><path d="M4.500 8.500h20M18.500 2.500l6 6-6 6"/><path d="M23.500 19.500h-20M9.500 13.500l-6 6 6 6"/></g></svg>
<svg class="abs" style="left:2905px;top:92px" width="38" height="27" viewBox="0 0 38 27"><g fill="none" stroke="#878787" stroke-width="2"><path d="M1 2h12.500M1 9.500h15.500M1 17h12.500M1 24.500h15.500"/><rect x="22" y="2" width="14" height="23"/><rect x="26.200" y="6" width="5.600" height="15"/></g></svg>
<div class="abs" style="left:2960px;top:94px;width:2px;height:22px;background:#dedede"></div>
<svg class="abs" style="left:2979px;top:91.500px" width="28" height="27" viewBox="0 0 28 27"><g fill="none" stroke="#878787" stroke-width="2.200" stroke-linecap="round"><rect x="1.600" y="1.600" width="24.800" height="23.800" rx="4.500"/><path d="M9.200 2v23M14 13.500h8M18 9.500v8"/></g></svg>
<div class="hline" style="left:546px;top:188px;width:2478px"></div>
<svg class="abs" style="left:562.8px;top:147.2px" width="25" height="25" viewBox="0 0 30 30"><rect x="0" y="0" width="30" height="30" rx="7" fill="#4f8df8"/><rect x="2.600" y="2.600" width="24.800" height="24.800" rx="4.600" fill="#3478f6" stroke="#fff" stroke-width="1.500"/><g stroke="#fff" stroke-width="2.100" stroke-linecap="round" fill="none"><path d="M8.600 22.200L16.400 6.200M13.300 8.600l9 13.600M5.900 17.300h18.300"/></g></svg>
<span class="t" style="left:600.5px;top:151.4px;font-size:22px;color:#2b2b2b;letter-spacing:0.655px;-webkit-text-stroke:0.2px;">EnhancedTodoList</span>
<svg class="abs" style="left:804px;top:151px" width="8" height="20" viewBox="0 0 8 20"><path d="M1.500 1.200Q4.500 6 6.300 10 4.500 14 1.500 18.800" fill="none" stroke="#6e6e6e" stroke-width="1.700" stroke-linecap="round" stroke-linejoin="round"/></svg>
<svg class="abs" style="left:829.2px;top:149.8px" width="25" height="20.0" viewBox="0 0 30 24"><path d="M0 3.2C0 1.4 1.3 0 3 0h6.6c1 0 1.7.3 2.4 1l1 1c.5.5 1 .7 1.800.7H27c1.700 0 3 1.300 3 3V5.800H0z" fill="#92969a"/><path d="M0 7.600h30V20.800c0 1.800-1.300 3.200-3 3.200H3c-1.700 0-3-1.400-3-3.200z" fill="#92969a"/></svg>
<span class="t" style="left:866.0px;top:151.4px;font-size:22px;color:#2b2b2b;letter-spacing:0.655px;-webkit-text-stroke:0.2px;">EnhancedTodoList</span>
<svg class="abs" style="left:1069.5px;top:151px" width="8" height="20" viewBox="0 0 8 20"><path d="M1.500 1.200Q4.500 6 6.300 10 4.500 14 1.500 18.800" fill="none" stroke="#6e6e6e" stroke-width="1.700" stroke-linecap="round" stroke-linejoin="round"/></svg>
<svg class="abs" style="left:1094.7px;top:149.8px" width="25" height="20.0" viewBox="0 0 30 24"><path d="M0 3.2C0 1.4 1.3 0 3 0h6.6c1 0 1.7.3 2.4 1l1 1c.5.5 1 .7 1.800.7H27c1.700 0 3 1.300 3 3V5.800H0z" fill="#92969a"/><path d="M0 7.600h30V20.800c0 1.800-1.300 3.200-3 3.200H3c-1.700 0-3-1.400-3-3.200z" fill="#92969a"/></svg>
<span class="t" style="left:1132.0px;top:151.4px;font-size:22px;color:#2b2b2b;letter-spacing:0.541px;-webkit-text-stroke:0.2px;">Views</span>
<svg class="abs" style="left:1204.5px;top:151px" width="8" height="20" viewBox="0 0 8 20"><path d="M1.500 1.200Q4.500 6 6.300 10 4.500 14 1.500 18.800" fill="none" stroke="#6e6e6e" stroke-width="1.700" stroke-linecap="round" stroke-linejoin="round"/></svg>
<svg class="abs" style="left:1226.1px;top:145.7px" width="32.4" height="32.4" viewBox="0 0 24 24"><path d="M13.543 3.41c4.114 2.47 6.545 7.162 5.549 11.131-.024.093-.05.181-.076.272l.002.001c2.062 2.538 1.5 5.258 1.236 4.745-1.072-2.086-3.066-1.568-4.088-1.043a6.803 6.803 0 0 1-.281.158l-.02.012-.002.002c-2.115 1.123-4.957 1.205-7.812-.022a12.568 12.568 0 0 1-5.64-4.838c.649.48 1.35.902 2.097 1.252 3.019 1.414 6.051 1.311 8.197-.002C9.651 12.73 7.101 9.67 5.146 7.191a10.628 10.628 0 0 1-1.005-1.384c2.34 2.142 6.038 4.83 7.365 5.576C8.69 8.408 6.208 4.743 6.324 4.86c4.436 4.47 8.528 6.996 8.528 6.996.154.085.27.154.36.213.085-.215.16-.437.224-.668.708-2.588-.09-5.548-1.893-7.992z" fill="url(#swg)"/></svg>
<span class="t" style="left:1267.0px;top:151.4px;font-size:22px;color:#2b2b2b;letter-spacing:0.730px;-webkit-text-stroke:0.2px;">TodoListView</span>
<svg class="abs" style="left:1416px;top:151px" width="8" height="20" viewBox="0 0 8 20"><path d="M1.500 1.200Q4.500 6 6.300 10 4.500 14 1.500 18.800" fill="none" stroke="#6e6e6e" stroke-width="1.700" stroke-linecap="round" stroke-linejoin="round"/></svg>
<div class="abs" style="left:1440px;top:146.300px;width:28px;height:28px;border-radius:6px;background:#c355d3"></div>
<span class="t" style="left:1446.8px;top:149.6px;font-size:21.5px;color:#fff;font-weight:bold;">S</span>
<span class="t" style="left:1479.0px;top:151.4px;font-size:22px;color:#2b2b2b;letter-spacing:0.730px;-webkit-text-stroke:0.2px;">TodoListView</span>
<svg class="abs" style="left:2932.8px;top:149.0px" width="14.5" height="25" viewBox="-2 -2 14.5 25"><path d="M10.5 0L0 10.5L10.5 21" fill="none" stroke="#7a7a7a" stroke-width="2" stroke-linecap="round" stroke-linejoin="round"/></svg>
<svg class="abs" style="left:2958.2px;top:149.5px" width="23.0" height="23.0" viewBox="0 0 26 26"><path d="M9.500 4.200h7l5.300 5.300v7l-5.300 5.300h-7l-5.300-5.300v-7z" fill="#b8281c" stroke="#b8281c" stroke-width="6.800" stroke-linejoin="round"/><path d="M9.200 9.200l7.600 7.600M16.800 9.200l-7.600 7.600" stroke="#fff" stroke-width="2.6" stroke-linecap="round"/></svg>
<svg class="abs" style="left:2991.8px;top:149.0px" width="14.5" height="25" viewBox="-2 -2 14.5 25"><path d="M0 0L10.5 10.5L0 21" fill="none" stroke="#7a7a7a" stroke-width="2" stroke-linecap="round" stroke-linejoin="round"/></svg>
<div id="editor"><div id="edin">
<div class="curline"></div>
<div class="rbwrap">
<div class="rb r0" style="top:194px;height:236px"></div>
<div class="rb r0" style="top:554px;height:1400px"></div>
<div class="rb r1" style="top:1314px;height:356px"></div>
<div class="rb r2" style="top:1354px;height:98px;border-radius:7px 7px 0 0"></div>
<div class="rb r2" style="top:1454px;height:176px;border-radius:0 0 7px 7px"></div>
<div class="rb r3" style="top:1474px;height:116px"></div>
<div class="rb r1" style="top:1754px;height:300px"></div>
<div class="rb r2" style="top:1794px;height:300px"></div>
<div class="rbcur"></div>
</div>
<div class="chg" style="top:712px"></div>
<div class="chg" style="top:952px"></div>
<div class="ln" style="top:192px">1</div>
<div class="cl" style="top:192px"><span class="c">//</span></div>
<div class="ln" style="top:232px">2</div>
<div class="cl" style="top:232px"><span class="c">//  TodoListView.swift</span></div>
<div class="ln" style="top:272px">3</div>
<div class="cl" style="top:272px"><span class="c">//  EnhancedTodoList</span></div>
<div class="ln" style="top:312px">4</div>
<div class="cl" style="top:312px"><span class="c">//</span></div>
<div class="ln" style="top:352px">5</div>
<div class="cl" style="top:352px"><span class="c">//  Created by Russell Gordon on 2024<span class="hy">-</span>01<span class="hy">-</span>18.</span></div>
<div class="ln" style="top:392px">6</div>
<div class="cl" style="top:392px"><span class="c">//</span></div>
<div class="ln" style="top:432px">7</div>
<div class="ln" style="top:472px">8</div>
<div class="cl" style="top:472px"><span class="k">import</span> SwiftUI</div>
<div class="ln" style="top:512px">9</div>
<div class="ln" style="top:552px">10</div>
<div class="cl" style="top:552px"><span class="k">struct</span> <span class="td">TodoListView</span>: <span class="st">View</span> {</div>
<div class="ln" style="top:592px">11</div>
<div class="ln" style="top:632px">12</div>
<div class="cl" style="top:632px"><span class="c">    // </span><span class="m">MARK: Stored properties</span></div>
<div class="ln" style="top:672px">13</div>
<div class="ln" style="top:712px">14</div>
<div class="cl" style="top:712px"><span class="c">    // Access the model context so we can "CRUD" data</span></div>
<div class="ln" style="top:752px">15</div>
<div class="cl" style="top:752px">    <span class="st">@Environment</span>(\.<span class="sf">modelContext</span>) <span class="k">private</span> <span class="k">var</span> <span class="od">modelContext</span></div>
<div class="ln" style="top:792px">16</div>
<div class="ln" style="top:832px">17</div>
<div class="cl" style="top:832px"><span class="c">    // The item currently being created</span></div>
<div class="ln" style="top:872px">18</div>
<div class="cl" style="top:872px">    <span class="st">@State</span> <span class="k">private</span> <span class="k">var</span> <span class="od">newItemDetails</span> = <span class="s">""</span></div>
<div class="ln" style="top:912px">19</div>
<div class="ln" style="top:952px">20</div>
<div class="cl" style="top:952px"><span class="c">    // Run a query to obtain the list of to<span class="hy">-</span>do items</span></div>
<div class="ln cur" style="top:992px">21</div>
<div class="cl" style="top:992px">    <span class="st">@</span><span class="stu">Q</span><span class="st">uery</span> <span class="k">private</span> <span class="k">var</span> <span class="od">items</span>: [<span class="pt">TodoItem</span>]</div>
<div class="ln" style="top:1032px">22</div>
<div class="ln" style="top:1072px">23</div>
<div class="cl" style="top:1072px"><span class="c">    // The search text provided by the user</span></div>
<div class="ln" style="top:1112px">24</div>
<div class="cl" style="top:1112px">    <span class="st">@State</span> <span class="k">var</span> <span class="od">searchText</span> = <span class="s">""</span></div>
<div class="ln" style="top:1152px">25</div>
<div class="ln" style="top:1192px">26</div>
<div class="cl" style="top:1192px"><span class="c">    // </span><span class="m">MARK: Computed properties</span></div>
<div class="ln" style="top:1232px">27</div>
<div class="ln" style="top:1272px">28</div>
<div class="cl" style="top:1272px"><span class="c">    // Provide list of to<span class="hy">-</span>do items filtered based on the search text</span></div>
<div class="ln" style="top:1312px">29</div>
<div class="cl" style="top:1312px">    <span class="k">var</span> <span class="od">filteredItems</span>: [<span class="pt">TodoItem</span>] {</div>
<div class="ln" style="top:1352px">30</div>
<div class="cl" style="top:1352px">        <span class="k">if</span> <span class="pv">searchText</span>.<span class="sf">isEmpty</span> {</div>
<div class="ln" style="top:1392px">31</div>
<div class="cl" style="top:1392px">            <span class="k">return</span> <span class="pv">items</span></div>
<div class="ln" style="top:1432px">32</div>
<div class="cl" style="top:1432px">        } <span class="k">else</span> {</div>
<div class="ln" style="top:1472px">33</div>
<div class="cl" style="top:1472px">            <span class="k">return</span> <span class="pv">items</span>.<span class="sf">filter</span> { item <span class="k">in</span></div>
<div class="ln" style="top:1512px">34</div>
<div class="cl" style="top:1512px">                item.<span class="pv">details</span>.<span class="sf">lowercased</span>().<span class="sf">contains</span>(<span class="pv">searchText</span>.<span class="sf">lowercased</span>())</div>
<div class="ln" style="top:1552px">35</div>
<div class="cl" style="top:1552px">            }</div>
<div class="ln" style="top:1592px">36</div>
<div class="cl" style="top:1592px">        }</div>
<div class="ln" style="top:1632px">37</div>
<div class="cl" style="top:1632px">    }</div>
<div class="ln" style="top:1672px">38</div>
<div class="ln" style="top:1712px">39</div>
<div class="cl" style="top:1712px"><span class="c">    // The user interface</span></div>
<div class="ln" style="top:1752px">40</div>
<div class="cl" style="top:1752px">    <span class="k">var</span> <span class="od">body</span>: <span class="k">some</span> <span class="st">View</span> {</div>
<div class="ln" style="top:1792px">41</div>
<div class="cl" style="top:1792px">        <span class="st">NavigationStack</span> {</div>
<div class="err1"></div>
<svg class="abs" style="left:1767.0px;top:997.0px" width="31.4" height="31.4" viewBox="-3 -3 32 32"><path d="M9.500 4.200h7l5.300 5.300v7l-5.300 5.300h-7l-5.300-5.300v-7z" fill="#fff" stroke="#fff" stroke-width="11" stroke-linejoin="round"/><path d="M9.500 4.200h7l5.300 5.300v7l-5.300 5.300h-7l-5.300-5.300v-7z" fill="#b8281c" stroke="#b8281c" stroke-width="6.800" stroke-linejoin="round"/><path d="M9.200 9.200l7.600 7.600M16.800 9.200l-7.600 7.600" stroke="#fff" stroke-width="2.6" stroke-linecap="round"/></svg>
<div class="err2"><span class="t" style="left:13.0px;top:7.0px;font-size:29.5px;color:#1e1a1c;letter-spacing:0.817px;-webkit-text-stroke:0.3px;">Unknown attribute 'Query'</span></div>
</div></div>
<div id="pv"></div>
<div class="abs" style="left:2238px;top:190px;width:2px;height:1643px;background:#e3e3e3"></div>
<div class="abs" style="left:2330.5px;top:618.5px;width:7px;height:45px;border-radius:2.500px;background:#2b2b2b"></div>
<div class="abs" style="left:2330.5px;top:702px;width:7px;height:87px;border-radius:2.500px;background:#2b2b2b"></div>
<div class="abs" style="left:2330.5px;top:813px;width:7px;height:87px;border-radius:2.500px;background:#2b2b2b"></div>
<div class="abs" style="left:2926.5px;top:759px;width:6.5px;height:138px;border-radius:2.500px;background:#2b2b2b"></div>
<svg class="abs" style="left:2330px;top:390px;filter:drop-shadow(0 0 0.700px rgba(40,40,40,.8))" width="604" height="1240" viewBox="2330 390 604 1240"><path d="M2338.5 513.5L2339.1 491.9L2340.8 476.8L2343.6 463.8L2347.5 452.2L2352.5 441.8L2358.6 432.5L2365.8 424.3L2374.0 417.1L2383.3 411.0L2393.7 406.0L2405.3 402.1L2418.3 399.3L2433.4 397.6L2455.0 397.0L2809.0 397.0L2830.6 397.6L2845.7 399.3L2858.7 402.1L2870.3 406.0L2880.7 411.0L2890.0 417.1L2898.2 424.3L2905.4 432.5L2911.5 441.8L2916.5 452.2L2920.4 463.8L2923.2 476.8L2924.9 491.9L2925.5 513.5L2925.5 1505.5L2924.9 1527.1L2923.2 1542.2L2920.4 1555.2L2916.5 1566.8L2911.5 1577.2L2905.4 1586.5L2898.2 1594.7L2890.0 1601.9L2880.7 1608.0L2870.3 1613.0L2858.7 1616.9L2845.7 1619.7L2830.6 1621.4L2809.0 1622.0L2455.0 1622.0L2433.4 1621.4L2418.3 1619.7L2405.3 1616.9L2393.7 1613.0L2383.3 1608.0L2374.0 1601.9L2365.8 1594.7L2358.6 1586.5L2352.5 1577.2L2347.5 1566.8L2343.6 1555.2L2340.8 1542.2L2339.1 1527.1L2338.5 1505.5Z" fill="#2d2d2d"/></svg>
<div class="abs" style="left:2338px;top:527px;width:8px;height:8px;background:#1f1f1f"></div>
<div class="abs" style="left:2918px;top:527px;width:8px;height:8px;background:#1f1f1f"></div>
<div class="abs" style="left:2338px;top:1488px;width:8px;height:8px;background:#1f1f1f"></div>
<div class="abs" style="left:2918px;top:1488px;width:8px;height:8px;background:#1f1f1f"></div>
<div class="abs" style="left:2462px;top:1614px;width:9px;height:8px;background:#1f1f1f"></div>
<div class="abs" style="left:2770px;top:397px;width:9px;height:8px;background:#1f1f1f"></div>
<svg class="abs" style="left:2340px;top:400px" width="584" height="1220" viewBox="2340 400 584 1220"><path d="M2345.5 514.0L2346.0 493.7L2347.6 479.5L2350.3 467.3L2353.9 456.4L2358.7 446.6L2364.4 437.9L2371.1 430.1L2378.9 423.4L2387.6 417.7L2397.4 412.9L2408.3 409.3L2420.5 406.6L2434.7 405.0L2455.0 404.5L2809.0 404.5L2829.3 405.0L2843.5 406.6L2855.7 409.3L2866.6 412.9L2876.4 417.7L2885.1 423.4L2892.9 430.1L2899.6 437.9L2905.3 446.6L2910.1 456.4L2913.7 467.3L2916.4 479.5L2918.0 493.7L2918.5 514.0L2918.5 1505.0L2918.0 1525.3L2916.4 1539.5L2913.7 1551.7L2910.1 1562.6L2905.3 1572.4L2899.6 1581.1L2892.9 1588.9L2885.1 1595.6L2876.4 1601.3L2866.6 1606.1L2855.7 1609.7L2843.5 1612.4L2829.3 1614.0L2809.0 1614.5L2455.0 1614.5L2434.7 1614.0L2420.5 1612.4L2408.3 1609.7L2397.4 1606.1L2387.6 1601.3L2378.9 1595.6L2371.1 1588.9L2364.4 1581.1L2358.7 1572.4L2353.9 1562.6L2350.3 1551.7L2347.6 1539.5L2346.0 1525.3L2345.5 1505.0Z" fill="#000"/><path d="M2360.0 515.0L2360.5 497.4L2361.8 485.1L2364.1 474.5L2367.3 465.0L2371.4 456.5L2376.4 448.9L2382.2 442.2L2388.9 436.4L2396.5 431.4L2405.0 427.3L2414.5 424.1L2425.1 421.8L2437.4 420.5L2455.0 420.0L2809.5 420.0L2827.1 420.5L2839.4 421.8L2850.0 424.1L2859.5 427.3L2868.0 431.4L2875.6 436.4L2882.3 442.2L2888.1 448.9L2893.1 456.5L2897.2 465.0L2900.4 474.5L2902.7 485.1L2904.0 497.4L2904.5 515.0L2904.5 1506.0L2904.0 1523.6L2902.7 1535.9L2900.4 1546.5L2897.2 1556.0L2893.1 1564.5L2888.1 1572.1L2882.3 1578.8L2875.6 1584.6L2868.0 1589.6L2859.5 1593.7L2850.0 1596.9L2839.4 1599.2L2827.1 1600.5L2809.5 1601.0L2455.0 1601.0L2437.4 1600.5L2425.1 1599.2L2414.5 1596.9L2405.0 1593.7L2396.5 1589.6L2388.9 1584.6L2382.2 1578.8L2376.4 1572.1L2371.4 1564.5L2367.3 1556.0L2364.1 1546.5L2361.8 1535.9L2360.5 1523.6L2360.0 1506.0Z" fill="#f5f5f5"/></svg>
<div class="abs" style="left:2545.500px;top:435.500px;width:173.500px;height:51px;border-radius:26px;background:#000"></div>
<svg class="abs" style="left:2590px;top:919px" width="84" height="84" viewBox="0 0 84 84"><circle cx="42" cy="42" r="38.300" fill="none" stroke="#e8503f" stroke-width="4.600"/><path d="M27.500 27.500l29 29M56.500 27.500l-29 29" stroke="#e8503f" stroke-width="4.600" stroke-linecap="round"/></svg>
<span class="t" style="left:2538.5px;top:1035.5px;font-size:24.5px;color:#86868a;letter-spacing:-0.598px;font-weight:bold;">Preview Crashed</span>
<div class="card" style="left:2264px;top:214px;width:63px;height:52px;border-radius:12px"></div>
<svg class="abs" style="left:2284px;top:224px" width="22" height="32" viewBox="0 0 22 32"><g fill="none" stroke="#4f4f4f" stroke-width="2.200" stroke-linecap="round" stroke-linejoin="round"><path d="M3.500 1.800h15M5.500 2c1.500 1.800 2 3.500 2 6v3.500C4.500 12.800 2 15.300 1.800 19h18.400c-.2-3.700-2.700-6.200-5.700-7.500V8c0-2.500.500-4.200 2-6M11 19.500V30"/></g></svg>
<div class="card" style="left:2347px;top:214px;width:208px;height:52px;border-radius:12px;background:#cfdefc"></div>
<svg class="abs" style="left:2364.5px;top:229.0px" width="23.0" height="23.0" viewBox="0 0 26 26"><path d="M9.500 4.200h7l5.300 5.300v7l-5.300 5.300h-7l-5.300-5.300v-7z" fill="#e8503f" stroke="#e8503f" stroke-width="6.800" stroke-linejoin="round"/><path d="M9.200 9.200l7.600 7.600M16.800 9.200l-7.600 7.600" stroke="#fff" stroke-width="1.7" stroke-linecap="round"/></svg>
<span class="t" style="left:2400.0px;top:229.3px;font-size:22.5px;color:#2f72ee;letter-spacing:0.486px;">TodoListView</span>
<div class="card" style="left:2263.500px;top:329.500px;width:736px;height:80.500px;border-radius:13px"></div>
<svg class="abs" style="left:2283.0px;top:348.1px" width="43.0" height="43.0" viewBox="0 0 26 26"><path d="M9.500 4.200h7l5.300 5.300v7l-5.300 5.300h-7l-5.300-5.300v-7z" fill="#b8281c" stroke="#b8281c" stroke-width="6.800" stroke-linejoin="round"/><path d="M9.200 9.200l7.600 7.600M16.800 9.200l-7.600 7.600" stroke="#fff" stroke-width="3" stroke-linecap="round"/></svg>
<span class="t" style="left:2345.0px;top:357.9px;font-size:26.5px;color:#4a4a4a;letter-spacing:0.104px;font-weight:bold;">Failed to build the scheme ”Enh...</span>
<svg class="abs" style="left:2870px;top:350px" width="120" height="44" viewBox="2870 350 120 44"><g fill="none" stroke="#828282" stroke-width="2.100" stroke-linecap="round" stroke-linejoin="round"><path d="M2886.500 358.600c-3-.300-4.800 1-4.800 3.600 0 5 3.800 10.200 8.600 11 4.800-.800 8.600-6 8.600-11 0-2.600-1.800-3.900-4.800-3.600"/><path d="M2890.300 373.400v3.200c0 4 2.100 6.400 5.200 6.400 3.400 0 5-2.800 5.700-7.400.800-5.200 2-8.300 5.100-8.300 2.900 0 4.200 2.700 4.700 7.300"/><circle cx="2911" cy="378.300" r="3"/><path d="M2966 363.760A9.900 9.900 0 1 0 2971.900 372.450"/><path d="M2961.200 357.100l6.300 6-6.300 5.600"/></g><g fill="#828282"><circle cx="2886.900" cy="358.500" r="1.600"/><circle cx="2893.700" cy="358.500" r="1.600"/></g></svg>
<div class="card" style="left:2263.5px;top:1756px;width:163.5px;height:52px;border-radius:12px"></div>
<div class="card" style="left:2447px;top:1756px;width:63px;height:52px;border-radius:12px"></div>
<div class="card" style="left:2530px;top:1756px;width:54px;height:52px;border-radius:12px"></div>
<div class="card" style="left:2792px;top:1756px;width:208px;height:52px;border-radius:12px"></div>
<svg class="abs" style="left:2282px;top:1769px" width="26" height="26" viewBox="0 0 27 27"><circle cx="13.500" cy="13.500" r="13.300" fill="#2f72f0"/><path d="M10.200 8.300c0-.8.800-1.200 1.500-.8l7.300 5.100c.6.400.6 1.300 0 1.700l-7.300 5.200c-.7.400-1.500 0-1.500-.8z" fill="#fff"/></svg>
<svg class="abs" style="left:2330.2px;top:1770.7px" width="23.6" height="22.7" viewBox="0 0 26 25"><rect x="1.300" y="1.300" width="23.400" height="22.400" rx="3" fill="none" stroke="#4f4f4f" stroke-width="2.300"/><path d="M9.500 6v12.500l3.200-3 2.400 5.200 2.300-1-2.400-5.100h4.300z" fill="#4f4f4f"/></svg>
<svg class="abs" style="left:2384.3px;top:1773.0px" width="23.4" height="18.9" viewBox="0 0 26 21"><g fill="none" stroke="#4f4f4f" stroke-width="1.600"><rect x="1" y="1.2" width="5" height="7.600" rx="0.800"/><rect x="1" y="11.7" width="5" height="7.600" rx="0.800"/><rect x="10" y="1.2" width="5" height="7.600" rx="0.800"/><rect x="10" y="11.7" width="5" height="7.600" rx="0.800"/><rect x="19" y="1.2" width="5" height="7.600" rx="0.800"/><rect x="19" y="11.7" width="5" height="7.600" rx="0.800"/></g></svg>
<svg class="abs" style="left:2465.800px;top:1770.300px" width="24.400" height="24.400" viewBox="0 0 26 26"><rect x="1.200" y="1.200" width="23.600" height="9.600" rx="4.800" fill="none" stroke="#4f4f4f" stroke-width="2"/><circle cx="6.500" cy="6" r="2.800" fill="#4f4f4f"/><rect x="0.200" y="14.200" width="25.600" height="11.600" rx="5.800" fill="#4f4f4f"/><circle cx="19.500" cy="20" r="3.400" fill="#fff"/></svg>
<svg class="abs" style="left:2549.8px;top:1771.2px" width="14.4" height="22.5" viewBox="0 0 16 25"><rect x="1.100" y="1.100" width="13.800" height="22.800" rx="2.800" fill="#cfcfcf" stroke="#4f4f4f" stroke-width="2"/><path d="M6 3.400h4M5.500 21.500h5" stroke="#4f4f4f" stroke-width="1.200" stroke-linecap="round"/></svg>
<svg class="abs" style="left:2810.0px;top:1767.800px" width="27" height="27" viewBox="0 0 27 27"><circle cx="10.800" cy="10.800" r="9" fill="none" stroke="#4f4f4f" stroke-width="2.800"/><path d="M17.800 17.800l6.700 6.700" stroke="#4f4f4f" stroke-width="3.800" stroke-linecap="round"/><path d="M6.800 10.800h8" stroke="#4f4f4f" stroke-width="2.200" stroke-linecap="round"/></svg>
<svg class="abs" style="left:2858.0px;top:1767.800px" width="27" height="27" viewBox="0 0 27 27"><circle cx="10.800" cy="10.800" r="9" fill="none" stroke="#4f4f4f" stroke-width="2.800"/><path d="M17.800 17.800l6.700 6.700" stroke="#4f4f4f" stroke-width="3.800" stroke-linecap="round"/><path d="M9.300 8.300l2-1.300v7.800" fill="none" stroke="#4f4f4f" stroke-width="2" stroke-linecap="round" stroke-linejoin="round"/></svg>
<svg class="abs" style="left:2905.5px;top:1767.800px" width="27" height="27" viewBox="0 0 27 27"><circle cx="10.800" cy="10.800" r="9" fill="none" stroke="#4f4f4f" stroke-width="2.800"/><path d="M17.800 17.800l6.700 6.700" stroke="#4f4f4f" stroke-width="3.800" stroke-linecap="round"/><rect x="7.600" y="7.600" width="6.400" height="6.400" rx="1" fill="none" stroke="#4f4f4f" stroke-width="2"/></svg>
<svg class="abs" style="left:2953.5px;top:1767.800px" width="27" height="27" viewBox="0 0 27 27"><circle cx="10.800" cy="10.800" r="9" fill="none" stroke="#4f4f4f" stroke-width="2.800"/><path d="M17.800 17.800l6.700 6.700" stroke="#4f4f4f" stroke-width="3.800" stroke-linecap="round"/><path d="M6.800 10.800h8M10.800 6.800v8" stroke="#4f4f4f" stroke-width="2.200" stroke-linecap="round"/></svg>
<div class="abs" style="left:546px;top:1834px;width:2478px;height:54px;background:#fff"></div>
<div class="hline" style="left:546px;top:1832px;width:2478px"></div>
<svg class="abs" style="left:569px;top:1851px" width="30" height="19" viewBox="0 0 30 19"><path d="M4 0h19.500c1.200 0 2 .5 2.600 1.500l3.400 6.300c.6 1 .6 2.300 0 3.400l-3.400 6.300c-.6 1-1.400 1.500-2.600 1.500H4c-2.300 0-4-1.700-4-4V4c0-2.300 1.700-4 4-4z" fill="#2f72f0"/></svg>
<span class="t" style="left:2774.5px;top:1850.7px;font-size:22px;color:#808080;letter-spacing:0.721px;-webkit-text-stroke:0.45px #808080;">Line: 21  Col: 2</span>
<div class="abs" style="left:2954px;top:1850px;width:2px;height:24px;background:#dedede"></div>
<svg class="abs" style="left:2973px;top:1847.800px" width="26.500" height="26" viewBox="0 0 27 26"><rect x="1.200" y="1.200" width="24.600" height="23.600" rx="4.500" fill="none" stroke="#6e6e6e" stroke-width="2.200"/><rect x="5" y="16.500" width="17" height="5" rx="1.500" fill="#6e6e6e"/></svg>
</div>
</body>
</html>
